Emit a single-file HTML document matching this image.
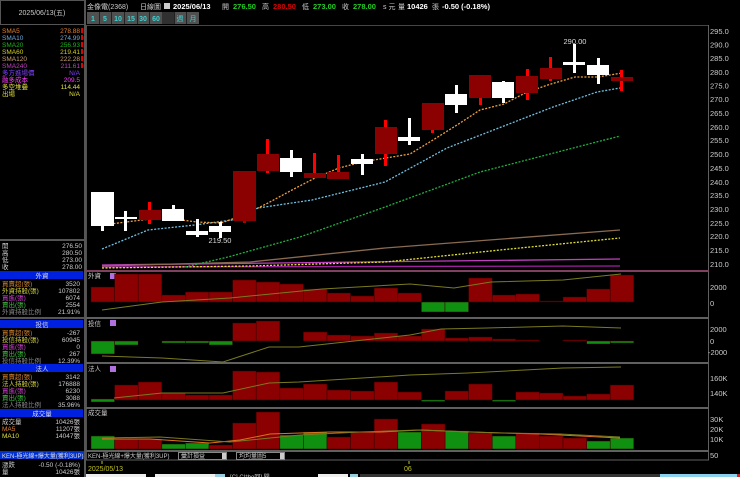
<!DOCTYPE html>
<html><head><meta charset="utf-8"><style>
html,body{margin:0;padding:0;background:#000;width:740px;height:477px;overflow:hidden}
svg{display:block}
text{font-family:"Liberation Sans","Noto Sans CJK TC",sans-serif}
</style></head><body>
<svg width="740" height="477" viewBox="0 0 740 477" xmlns="http://www.w3.org/2000/svg">
<rect width="740" height="477" fill="#000"/>
<!-- left panel borders -->
<rect x="0.5" y="0.5" width="84" height="24" fill="none" stroke="#555"/>
<line x1="85" y1="0" x2="85" y2="477" stroke="#555" stroke-width="2"/>
<text x="42" y="15" font-size="7" fill="#ccc" text-anchor="middle">2025/06/13(五)</text>
<g font-size="6.5">
<text x="2" y="33" fill="#e08030">SMA5</text><text x="80" y="33" fill="#e08030" text-anchor="end">278.88</text>
<text x="2" y="40" fill="#6fa8dc">SMA10</text><text x="80" y="40" fill="#6fa8dc" text-anchor="end">274.99</text>
<text x="2" y="47" fill="#20b020">SMA20</text><text x="80" y="47" fill="#20b020" text-anchor="end">256.93</text>
<text x="2" y="54" fill="#d0d020">SMA60</text><text x="80" y="54" fill="#d0d020" text-anchor="end">219.41</text>
<text x="2" y="61" fill="#c8a070">SMA120</text><text x="80" y="61" fill="#c8a070" text-anchor="end">222.28</text>
<text x="2" y="68" fill="#c040c0">SMA240</text><text x="80" y="68" fill="#c040c0" text-anchor="end">211.61</text>
<text x="2" y="75" fill="#8040ff">多方進場價</text><text x="80" y="75" fill="#8040ff" text-anchor="end">N/A</text>
<text x="2" y="82" fill="#ff40ff">融多成本</text><text x="80" y="82" fill="#ff40ff" text-anchor="end">209.5</text>
<text x="2" y="89" fill="#e0e040">多空堆疊</text><text x="80" y="89" fill="#e0e040" text-anchor="end">114.44</text>
<text x="2" y="96" fill="#e0e040">出場</text><text x="80" y="96" fill="#e0e040" text-anchor="end">N/A</text>
</g>
<g fill="#e00000"><rect x="81" y="28" width="2" height="5"/><rect x="81" y="35" width="2" height="5"/><rect x="81" y="42" width="2" height="5"/><rect x="81" y="49" width="2" height="5"/><rect x="81" y="56" width="2" height="5"/><rect x="81" y="63" width="2" height="5"/></g>
<line x1="0" y1="240" x2="85" y2="240" stroke="#555" stroke-width="2"/>
<g font-size="6.5" fill="#ccc">
<text x="2" y="248">開</text><text x="82" y="248" text-anchor="end">276.50</text>
<text x="2" y="255">高</text><text x="82" y="255" text-anchor="end">280.50</text>
<text x="2" y="262">低</text><text x="82" y="262" text-anchor="end">273.00</text>
<text x="2" y="269">收</text><text x="82" y="269" text-anchor="end">278.00</text>
</g>
<!-- section headers -->
<g font-size="6.5">
<rect x="0" y="271" width="83" height="8" fill="#0020e0"/><text x="42" y="278" fill="#ddd" text-anchor="middle">外資</text>
<text x="2" y="286" fill="#d08030">買賣超(張)</text><text x="80" y="286" fill="#ccc" text-anchor="end">3520</text>
<text x="2" y="293" fill="#d0d040">外資持股(張)</text><text x="80" y="293" fill="#ccc" text-anchor="end">107802</text>
<text x="2" y="300" fill="#d040d0">買進(張)</text><text x="80" y="300" fill="#ccc" text-anchor="end">6074</text>
<text x="2" y="307" fill="#40c040">賣出(張)</text><text x="80" y="307" fill="#ccc" text-anchor="end">2554</text>
<text x="2" y="314" fill="#888">外資持股比例</text><text x="80" y="314" fill="#ccc" text-anchor="end">21.91%</text>
<line x1="0" y1="318" x2="85" y2="318" stroke="#555" stroke-width="2"/>
<rect x="0" y="320" width="83" height="8" fill="#0020e0"/><text x="42" y="327" fill="#ddd" text-anchor="middle">投信</text>
<text x="2" y="335" fill="#d08030">買賣超(張)</text><text x="80" y="335" fill="#ccc" text-anchor="end">-267</text>
<text x="2" y="342" fill="#d0d040">投信持股(張)</text><text x="80" y="342" fill="#ccc" text-anchor="end">60945</text>
<text x="2" y="349" fill="#d040d0">買進(張)</text><text x="80" y="349" fill="#ccc" text-anchor="end">0</text>
<text x="2" y="356" fill="#40c040">賣出(張)</text><text x="80" y="356" fill="#ccc" text-anchor="end">267</text>
<text x="2" y="363" fill="#888">投信持股比例</text><text x="80" y="363" fill="#ccc" text-anchor="end">12.39%</text>
<rect x="0" y="364" width="83" height="8" fill="#0020e0"/><text x="42" y="371" fill="#ddd" text-anchor="middle">法人</text>
<text x="2" y="379" fill="#d08030">買賣超(張)</text><text x="80" y="379" fill="#ccc" text-anchor="end">3142</text>
<text x="2" y="386" fill="#d0d040">法人持股(張)</text><text x="80" y="386" fill="#ccc" text-anchor="end">176888</text>
<text x="2" y="393" fill="#d040d0">買進(張)</text><text x="80" y="393" fill="#ccc" text-anchor="end">6230</text>
<text x="2" y="400" fill="#40c040">賣出(張)</text><text x="80" y="400" fill="#ccc" text-anchor="end">3088</text>
<text x="2" y="407" fill="#888">法人持股比例</text><text x="80" y="407" fill="#ccc" text-anchor="end">35.96%</text>
<rect x="0" y="409" width="83" height="8" fill="#0020e0"/><text x="42" y="416" fill="#ddd" text-anchor="middle">成交量</text>
<text x="2" y="424" fill="#ccc">成交量</text><text x="80" y="424" fill="#ccc" text-anchor="end">10426張</text>
<text x="2" y="431" fill="#e08030">MA5</text><text x="80" y="431" fill="#ccc" text-anchor="end">11207張</text>
<text x="2" y="438" fill="#e0e040">MA10</text><text x="80" y="438" fill="#ccc" text-anchor="end">14047張</text>
<rect x="0" y="451" width="84" height="8" fill="#0030d0"/><text x="2" y="458" fill="#ddd" font-size="6">KEN-極光線+爆大量(獲利3UP)</text>
<text x="2" y="467" fill="#ccc">漲跌</text><text x="80" y="467" fill="#ccc" text-anchor="end">-0.50 (-0.18%)</text>
<text x="2" y="474" fill="#ccc">量</text><text x="80" y="474" fill="#ccc" text-anchor="end">10426張</text>
</g>
<!-- header -->
<g font-size="7.5" font-weight="bold">
<text x="87" y="9" fill="#ccc" font-weight="normal" font-size="7">金像電(2368)</text>
<text x="140" y="9" fill="#ccc" font-weight="normal" font-size="7">日線圖</text>
<rect x="164" y="3" width="6" height="6" fill="#ccc"/>
<text x="173" y="9" fill="#fff">2025/06/13</text>
<text x="222" y="9" fill="#ccc" font-weight="normal" font-size="7">開</text><text x="233" y="9" fill="#20d020">276.50</text>
<text x="262" y="9" fill="#ccc" font-weight="normal" font-size="7">高</text><text x="273" y="9" fill="#e00000">280.50</text>
<text x="302" y="9" fill="#ccc" font-weight="normal" font-size="7">低</text><text x="313" y="9" fill="#20d020">273.00</text>
<text x="342" y="9" fill="#ccc" font-weight="normal" font-size="7">收</text><text x="353" y="9" fill="#20d020">278.00</text>
<text x="383" y="9" fill="#ccc" font-weight="normal" font-size="7">s 元</text>
<text x="398" y="9" fill="#ccc" font-weight="normal" font-size="7">量</text><text x="407" y="9" fill="#fff">10426</text>
<text x="432" y="9" fill="#ccc" font-weight="normal" font-size="7">張</text><text x="442" y="9" fill="#fff">-0.50 (-0.18%)</text>
</g>
<g font-size="7" fill="#40d0d0" font-weight="bold">
<rect x="87" y="12" width="112" height="12" fill="#505050"/>
<rect x="162" y="12" width="12" height="12" fill="#303030"/>
<g stroke="#222" stroke-width="1"><line x1="99.5" y1="12" x2="99.5" y2="24"/><line x1="111.5" y1="12" x2="111.5" y2="24"/><line x1="124.5" y1="12" x2="124.5" y2="24"/><line x1="137.5" y1="12" x2="137.5" y2="24"/><line x1="149.5" y1="12" x2="149.5" y2="24"/><line x1="174.5" y1="12" x2="174.5" y2="24"/><line x1="186.5" y1="12" x2="186.5" y2="24"/></g>
<text x="93" y="21" text-anchor="middle">1</text><text x="105" y="21" text-anchor="middle">5</text><text x="118" y="21" text-anchor="middle">10</text><text x="131" y="21" text-anchor="middle">15</text><text x="143" y="21" text-anchor="middle">30</text><text x="156" y="21" text-anchor="middle">60</text>
<text x="180" y="21" text-anchor="middle" font-weight="normal">週</text><text x="193" y="21" text-anchor="middle" font-weight="normal">月</text>
</g>
<!-- frames -->
<line x1="86" y1="25.5" x2="709" y2="25.5" stroke="#703040"/>
<line x1="708.5" y1="25" x2="708.5" y2="460" stroke="#606060"/>
<line x1="86.5" y1="25" x2="86.5" y2="460" stroke="#505050"/>
<g stroke="#606060" stroke-width="2">
<line x1="86" y1="271" x2="709" y2="271" stroke="#804060"/>
<line x1="86" y1="318" x2="709" y2="318"/>
<line x1="86" y1="363" x2="709" y2="363"/>
<line x1="86" y1="408" x2="709" y2="408"/>
<line x1="86" y1="451" x2="709" y2="451"/>
<line x1="86" y1="460" x2="709" y2="460" stroke-width="1"/>
</g>
<!-- price axis -->
<g font-size="7.5" fill="#ccc">
<text x="710" y="34">295.0</text><text x="710" y="47.5">290.0</text><text x="710" y="61">285.0</text><text x="710" y="75">280.0</text><text x="710" y="88.5">275.0</text><text x="710" y="102">270.0</text><text x="710" y="116">265.0</text><text x="710" y="130">260.0</text><text x="710" y="143">255.0</text><text x="710" y="157">250.0</text><text x="710" y="171">245.0</text><text x="710" y="185">240.0</text><text x="710" y="198">235.0</text><text x="710" y="212">230.0</text><text x="710" y="226">225.0</text><text x="710" y="239">220.0</text><text x="710" y="253">215.0</text><text x="710" y="267">210.0</text>
<text x="710" y="290">2000</text><text x="710" y="306">0</text>
<text x="710" y="332">2000</text><text x="710" y="344">0</text><text x="708" y="355">-2000</text>
<text x="710" y="381">160K</text><text x="710" y="396">140K</text>
<text x="710" y="422">30K</text><text x="710" y="432">20K</text><text x="710" y="442">10K</text>
<text x="710" y="458">50</text>
</g>
<!-- MAs -->
<g fill="none" stroke-width="1.3">
<polyline stroke="#c040c0" points="102,265 620,259"/>
<polyline stroke="#a020a0" points="102,267 620,266"/>
<polyline stroke="#8a6a50" points="102,266 250,262 385,248 620,230"/>
<polyline stroke="#e0e030" stroke-dasharray="2,1.5" points="102,268 250,266 385,262 500,250 620,238"/>
<polyline stroke="#20b040" stroke-dasharray="2,1.5" points="185,267 228,257 300,237 385,207 480,172 620,136"/>
<polyline stroke="#70c0e0" stroke-dasharray="2,1.5" points="102,249 148,230 195,225 232,220 258,208 312,200 385,182 447,148 553,107 597,92 620,88"/>
<polyline stroke="#f0a040" stroke-dasharray="2,1.5" points="103,225 126,222 150,219 174,219 197,222 221,223 244,215 268,203 292,190 315,178 339,168 362,162 386,158 410,154 433,140 457,125 480,110 504,104 527,92 551,84 575,77 598,77 622,73"/>
</g>
<!-- candles -->
<g id="c">
<rect x="91" y="192" width="23" height="34" fill="#fff"/><rect x="101" y="226" width="3" height="5" fill="#fff"/>
<rect x="115" y="217" width="22" height="2" fill="#fff"/><rect x="124" y="211" width="3" height="20" fill="#fff"/>
<rect x="148" y="202" width="3" height="22" fill="#f00"/><rect x="139" y="210" width="22" height="10" fill="#8b0000"/>
<rect x="162" y="209" width="22" height="12" fill="#fff"/><rect x="172" y="205" width="3" height="5" fill="#fff"/>
<rect x="186" y="231" width="22" height="4" fill="#fff"/><rect x="196" y="219" width="3" height="18" fill="#fff"/>
<rect x="209" y="226" width="22" height="6" fill="#fff"/><rect x="219" y="222" width="3" height="16" fill="#fff"/>
<rect x="243" y="171" width="3" height="52" fill="#a00"/><rect x="233" y="171" width="23" height="50" fill="#8b0000"/>
<rect x="266" y="139" width="3" height="34" fill="#f00"/><rect x="257" y="154" width="22" height="17" fill="#8b0000"/>
<rect x="280" y="158" width="22" height="14" fill="#fff"/><rect x="290" y="150" width="3" height="27" fill="#fff"/>
<rect x="313" y="153" width="3" height="25" fill="#f00"/><rect x="304" y="173" width="22" height="5" fill="#8b0000"/>
<rect x="337" y="155" width="3" height="24" fill="#f00"/><rect x="327" y="172" width="22" height="7" fill="#8b0000"/>
<rect x="351" y="159" width="22" height="5" fill="#fff"/><rect x="361" y="154" width="3" height="21" fill="#fff"/>
<rect x="384" y="120" width="3" height="46" fill="#f00"/><rect x="375" y="127" width="22" height="27" fill="#8b0000"/>
<rect x="398" y="137" width="22" height="4" fill="#fff"/><rect x="408" y="118" width="3" height="27" fill="#fff"/>
<rect x="431" y="103" width="3" height="30" fill="#f00"/><rect x="422" y="103" width="22" height="27" fill="#8b0000"/>
<rect x="445" y="94" width="22" height="11" fill="#fff"/><rect x="455" y="85" width="3" height="28" fill="#fff"/>
<rect x="479" y="75" width="3" height="30" fill="#f00"/><rect x="469" y="75" width="22" height="23" fill="#8b0000"/>
<rect x="492" y="82" width="22" height="16" fill="#fff"/><rect x="502" y="81" width="3" height="22" fill="#fff"/>
<rect x="526" y="69" width="3" height="31" fill="#f00"/><rect x="516" y="76" width="22" height="17" fill="#8b0000"/>
<rect x="549" y="57" width="3" height="24" fill="#f00"/><rect x="540" y="68" width="22" height="11" fill="#8b0000"/>
<rect x="563" y="62" width="22" height="3" fill="#fff"/><rect x="573" y="44" width="3" height="29" fill="#fff"/>
<rect x="587" y="65" width="22" height="10" fill="#fff"/><rect x="597" y="58" width="3" height="26" fill="#fff"/>
<rect x="620" y="70" width="3" height="21" fill="#f00"/><rect x="611" y="77" width="22" height="4" fill="#8b0000"/>
</g>
<text x="575" y="44" font-size="7.5" fill="#ddd" text-anchor="middle">290.00</text>
<text x="220" y="243" font-size="7.5" fill="#ddd" text-anchor="middle">219.50</text>
<!-- sub panel labels -->
<g font-size="6.5" fill="#ccc">
<text x="88" y="278">外資</text><rect x="110" y="273" width="6" height="6" fill="#b070e0"/>
<text x="88" y="326">投信</text><rect x="110" y="320" width="6" height="6" fill="#b070e0"/>
<text x="88" y="371">法人</text><rect x="110" y="366" width="6" height="6" fill="#b070e0"/>
<text x="88" y="415">成交量</text>
</g>
<!-- 外資 bars baseline 302 -->
<g stroke="#300" stroke-width="0.5">
<g fill="#8b0000">
<rect x="91" y="287" width="23.6" height="15"/><rect x="114.6" y="274" width="23.6" height="28"/><rect x="138.2" y="274" width="23.6" height="28"/><rect x="161.8" y="295" width="23.6" height="7"/><rect x="185.4" y="292" width="23.6" height="10"/><rect x="209" y="292" width="23.6" height="10"/><rect x="232.6" y="280" width="23.6" height="22"/><rect x="256.2" y="282" width="23.6" height="20"/><rect x="279.8" y="284" width="23.6" height="18"/><rect x="303.4" y="289" width="23.6" height="13"/><rect x="327" y="293" width="23.6" height="9"/><rect x="350.6" y="296" width="23.6" height="6"/><rect x="374.2" y="288" width="23.6" height="14"/><rect x="397.8" y="293" width="23.6" height="9"/><rect x="468.6" y="278" width="23.6" height="24"/><rect x="492.2" y="295" width="23.6" height="7"/><rect x="515.8" y="294" width="23.6" height="8"/><rect x="539.4" y="301" width="23.6" height="1"/><rect x="563" y="297" width="23.6" height="5"/><rect x="586.6" y="289" width="23.6" height="13"/><rect x="610.2" y="275" width="23.6" height="27"/>
</g>
<g fill="#109010"><rect x="421.4" y="302" width="23.6" height="10"/><rect x="445" y="302" width="23.6" height="10"/></g>
</g>
<polyline fill="none" stroke="#7a7a20" stroke-width="1" points="102,310 162,302 230,298 322,289 410,284 454,288 491,282 563,280 621,274"/>
<!-- 投信 baseline 341 -->
<g stroke="#300" stroke-width="0.5">
<g fill="#109010"><rect x="91" y="341" width="23.6" height="13"/><rect x="114.6" y="341" width="23.6" height="4"/><rect x="161.8" y="341" width="23.6" height="2"/><rect x="185.4" y="341" width="23.6" height="2"/><rect x="209" y="341" width="23.6" height="4"/><rect x="586.6" y="341" width="23.6" height="3"/><rect x="610.2" y="341" width="23.6" height="2"/></g>
<g fill="#8b0000"><rect x="232.6" y="323" width="23.6" height="18"/><rect x="256.2" y="321" width="23.6" height="20"/><rect x="303.4" y="332" width="23.6" height="9"/><rect x="327" y="335" width="23.6" height="6"/><rect x="350.6" y="336" width="23.6" height="5"/><rect x="374.2" y="333" width="23.6" height="8"/><rect x="397.8" y="336" width="23.6" height="5"/><rect x="421.4" y="329" width="23.6" height="12"/><rect x="445" y="338" width="23.6" height="3"/><rect x="468.6" y="337" width="23.6" height="4"/><rect x="492.2" y="339" width="23.6" height="2"/><rect x="515.8" y="340" width="23.6" height="1"/><rect x="563" y="340" width="23.6" height="1"/></g>
</g>
<polyline fill="none" stroke="#7a7a20" stroke-width="1" points="102,356 162,358 223,362 269,347 299,347 410,335 441,329 487,328 563,326 621,328"/>
<!-- 法人 baseline 400 -->
<g stroke="#300" stroke-width="0.5">
<g fill="#109010"><rect x="91" y="399" width="23.6" height="3"/><rect x="421.4" y="400" width="23.6" height="1.5"/><rect x="492.2" y="400" width="23.6" height="1.5"/></g>
<g fill="#8b0000"><rect x="114.6" y="385" width="23.6" height="15"/><rect x="138.2" y="382" width="23.6" height="18"/><rect x="161.8" y="393" width="23.6" height="7"/><rect x="185.4" y="395" width="23.6" height="5"/><rect x="209" y="395" width="23.6" height="5"/><rect x="232.6" y="371" width="23.6" height="29"/><rect x="256.2" y="372" width="23.6" height="28"/><rect x="279.8" y="388" width="23.6" height="12"/><rect x="303.4" y="384" width="23.6" height="16"/><rect x="327" y="390" width="23.6" height="10"/><rect x="350.6" y="391" width="23.6" height="9"/><rect x="374.2" y="382" width="23.6" height="18"/><rect x="397.8" y="392" width="23.6" height="8"/><rect x="445" y="391" width="23.6" height="9"/><rect x="468.6" y="384" width="23.6" height="16"/><rect x="515.8" y="392" width="23.6" height="8"/><rect x="539.4" y="393" width="23.6" height="7"/><rect x="563" y="396" width="23.6" height="4"/><rect x="586.6" y="394" width="23.6" height="6"/><rect x="610.2" y="385" width="23.6" height="15"/></g>
</g>
<polyline fill="none" stroke="#7a7a20" stroke-width="1" points="114,398 162,393 223,393 269,383 299,382 410,375 468,373 563,368 621,367"/>
<!-- volume baseline 449 -->
<g stroke="#300" stroke-width="0.5">
<g fill="#109010"><rect x="91" y="436" width="23.6" height="13"/><rect x="161.8" y="444" width="23.6" height="5"/><rect x="185.4" y="443" width="23.6" height="6"/><rect x="279.8" y="435" width="23.6" height="14"/><rect x="303.4" y="432" width="23.6" height="17"/><rect x="397.8" y="432" width="23.6" height="17"/><rect x="445" y="431" width="23.6" height="18"/><rect x="492.2" y="436" width="23.6" height="13"/><rect x="586.6" y="441" width="23.6" height="8"/><rect x="610.2" y="438" width="23.6" height="11"/></g>
<g fill="#8b0000"><rect x="114.6" y="439" width="23.6" height="10"/><rect x="138.2" y="439" width="23.6" height="10"/><rect x="209" y="445" width="23.6" height="4"/><rect x="232.6" y="423" width="23.6" height="26"/><rect x="256.2" y="412" width="23.6" height="37"/><rect x="327" y="437" width="23.6" height="12"/><rect x="350.6" y="432" width="23.6" height="17"/><rect x="374.2" y="419" width="23.6" height="30"/><rect x="421.4" y="424" width="23.6" height="25"/><rect x="468.6" y="433" width="23.6" height="16"/><rect x="515.8" y="433" width="23.6" height="16"/><rect x="539.4" y="436" width="23.6" height="13"/><rect x="563" y="438" width="23.6" height="11"/></g>
</g>
<polyline fill="none" stroke="#e07020" stroke-width="1" points="102,439 150,439 210,443 240,440 270,434 330,432 380,432 420,430 470,432 540,434 620,438"/>
<polyline fill="none" stroke="#7a7a20" stroke-width="1" points="102,438 160,437 230,442 300,435 360,432 420,430 500,433 560,434 620,437"/>
<!-- toolbar -->
<g font-size="6" fill="#ccc">
<text x="88" y="458">KEN-極光線+爆大量(獲利3UP)</text>
<rect x="178.5" y="452.5" width="48" height="7" fill="none" stroke="#888"/><text x="181" y="458">彙計損益</text><rect x="222" y="453" width="4" height="6" fill="#ccc"/>
<rect x="236.5" y="452.5" width="48" height="7" fill="none" stroke="#888"/><text x="239" y="458">均均量圖5</text><rect x="280" y="453" width="4" height="6" fill="#ccc"/>
</g>
<line x1="102" y1="461" x2="102" y2="464" stroke="#c0c020"/>
<line x1="409" y1="461" x2="409" y2="464" stroke="#c0c020"/>
<text x="88" y="471" font-size="7" fill="#c0c020">2025/05/13</text>
<text x="404" y="471" font-size="7" fill="#c0c020">06</text>
<!-- bottom strip -->
<rect x="86" y="474" width="60" height="3" fill="#eee"/>
<rect x="155" y="474" width="60" height="3" fill="#eee"/>
<rect x="215" y="474" width="10" height="3" fill="#9cd"/>
<text x="230" y="479" font-size="6" fill="#ccc">[C] C!*bo回] 閱</text>
<rect x="318" y="474" width="30" height="3" fill="#eee"/>
<rect x="350" y="474" width="8" height="3" fill="#9cd"/>
<rect x="360" y="474" width="300" height="3" fill="#333"/>
<rect x="660" y="474" width="78" height="3" fill="#8cd0f0"/>
<rect x="737" y="474" width="3" height="3" fill="#e02020"/>
</svg>
</body></html>
